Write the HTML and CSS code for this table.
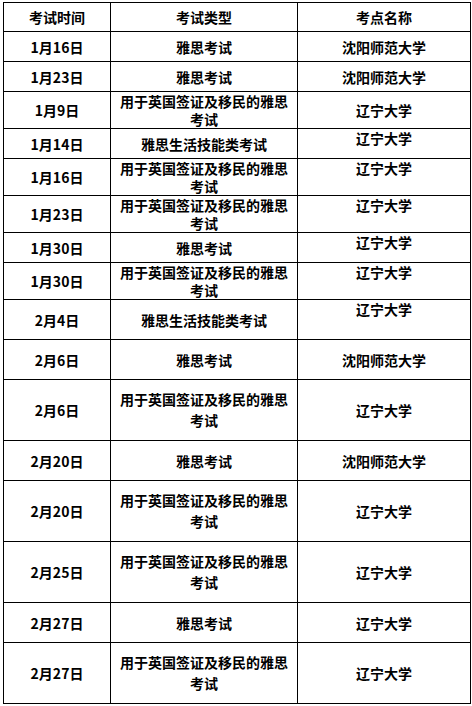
FILE: index.html
```html
<!DOCTYPE html>
<html lang="zh-CN">
<head>
<meta charset="utf-8">
<title>雅思考试安排</title>
<link rel="stylesheet" href="styles.css">
</head>
<body>
<table class="schedule">
  <thead>
    <tr><th>考试时间</th><th>考试类型</th><th>考点名称</th></tr>
  </thead>
  <tbody>
    <tr><td>1月16日</td><td>雅思考试</td><td>沈阳师范大学</td></tr>
    <tr><td>1月23日</td><td>雅思考试</td><td>沈阳师范大学</td></tr>
    <tr><td>1月9日</td><td>用于英国签证及移民的雅思<br>考试</td><td>辽宁大学</td></tr>
    <tr><td>1月14日</td><td>雅思生活技能类考试</td><td class="top">辽宁大学</td></tr>
    <tr><td>1月16日</td><td>用于英国签证及移民的雅思<br>考试</td><td class="top">辽宁大学</td></tr>
    <tr><td>1月23日</td><td>用于英国签证及移民的雅思<br>考试</td><td class="top">辽宁大学</td></tr>
    <tr><td>1月30日</td><td>雅思考试</td><td class="top">辽宁大学</td></tr>
    <tr><td>1月30日</td><td>用于英国签证及移民的雅思<br>考试</td><td class="top">辽宁大学</td></tr>
    <tr><td>2月4日</td><td>雅思生活技能类考试</td><td class="top">辽宁大学</td></tr>
    <tr><td>2月6日</td><td>雅思考试</td><td>沈阳师范大学</td></tr>
    <tr><td>2月6日</td><td class="loose">用于英国签证及移民的雅思<br>考试</td><td>辽宁大学</td></tr>
    <tr><td>2月20日</td><td>雅思考试</td><td>沈阳师范大学</td></tr>
    <tr><td>2月20日</td><td class="loose">用于英国签证及移民的雅思<br>考试</td><td>辽宁大学</td></tr>
    <tr><td>2月25日</td><td class="loose">用于英国签证及移民的雅思<br>考试</td><td>辽宁大学</td></tr>
    <tr><td>2月27日</td><td>雅思考试</td><td>辽宁大学</td></tr>
    <tr><td>2月27日</td><td class="loose">用于英国签证及移民的雅思<br>考试</td><td>辽宁大学</td></tr>
  </tbody>
</table>
</body>
</html>
```

FILE: styles.css
```css
html, body {
  margin: 0;
  background: #ffffff;
}

body {
  padding: 2px 0 0 3px;
  font-family: "Noto Sans CJK SC", "Noto Sans", sans-serif;
  font-size: 14px;
  font-weight: 700;
  color: #000000;
}

.schedule {
  display: grid;
  width: 468px;
  box-sizing: border-box;
  grid-template-columns: 107px 187px 173px;
  grid-template-rows: 29px 30px 30px 37px 30px 37px 37px 30px 37px 40px 40px 61px 40px 61px 61px 40px 61px;
  border-left: 1px solid #000000;
  border-top: 1px solid #000000;
}

.schedule thead,
.schedule tbody,
.schedule tr {
  display: contents;
}

.schedule th,
.schedule td {
  display: flex;
  align-items: center;
  justify-content: center;
  text-align: center;
  padding: 0;
  line-height: 18px;
  font-weight: 700;
  border-right: 1px solid #000000;
  border-bottom: 1px solid #000000;
  white-space: nowrap;
}

.schedule td.top {
  align-items: flex-start;
}

.schedule td.loose {
  line-height: 21px;
}
```
